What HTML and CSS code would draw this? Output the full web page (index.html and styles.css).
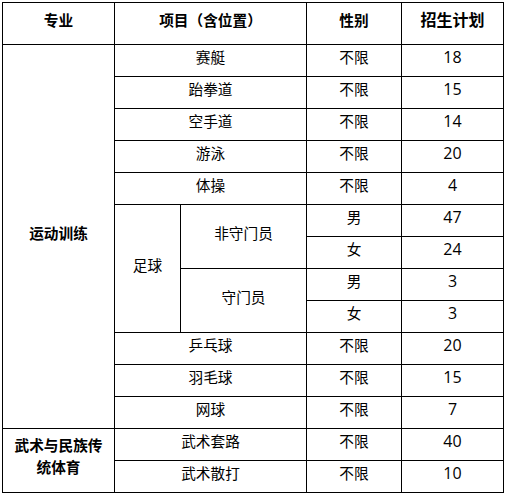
FILE: index.html
```html
<!DOCTYPE html>
<html lang="zh">
<head>
<meta charset="utf-8">
<link rel="stylesheet" href="styles.css">
</head>
<body>
<div class="plan">
  <div class="cell head c1">专业</div>
  <div class="cell head c23">项目（含位置）</div>
  <div class="cell head c4">性别</div>
  <div class="cell head big c5">招生计划</div>

  <div class="cell bold major1">运动训练</div>
  <div class="cell bold major2">武术与民族传统体育</div>

  <div class="cell c23">赛艇</div><div class="cell c4">不限</div><div class="cell c5 num">18</div>
  <div class="cell c23">跆拳道</div><div class="cell c4">不限</div><div class="cell c5 num">15</div>
  <div class="cell c23">空手道</div><div class="cell c4">不限</div><div class="cell c5 num">14</div>
  <div class="cell c23">游泳</div><div class="cell c4">不限</div><div class="cell c5 num">20</div>
  <div class="cell c23">体操</div><div class="cell c4">不限</div><div class="cell c5 num">4</div>

  <div class="cell football">足球</div>
  <div class="cell field">非守门员</div><div class="cell c4">男</div><div class="cell c5 num">47</div>
  <div class="cell c4">女</div><div class="cell c5 num">24</div>
  <div class="cell keeper">守门员</div><div class="cell c4">男</div><div class="cell c5 num">3</div>
  <div class="cell c4">女</div><div class="cell c5 num">3</div>

  <div class="cell c23">乒乓球</div><div class="cell c4">不限</div><div class="cell c5 num">20</div>
  <div class="cell c23">羽毛球</div><div class="cell c4">不限</div><div class="cell c5 num">15</div>
  <div class="cell c23">网球</div><div class="cell c4">不限</div><div class="cell c5 num">7</div>
  <div class="cell c23">武术套路</div><div class="cell c4">不限</div><div class="cell c5 num">40</div>
  <div class="cell c23">武术散打</div><div class="cell c4">不限</div><div class="cell c5 num">10</div>
</div>
</body>
</html>
```

FILE: styles.css
```css
html, body {
  margin: 0;
  padding: 0;
  background: #fff;
}

body {
  padding: 2px 0 0 2px;
  font-family: "Open Sans", "Noto Sans CJK SC", sans-serif;
  font-size: 14.67px;
  color: #000;
}

.plan {
  display: grid;
  width: 502px;
  grid-template-columns: 111px 65px 125px 94px 101px;
  grid-template-rows: 41px repeat(14, 31px);
  gap: 1px;
  padding: 1px;
  box-sizing: border-box;
  background: #000;
}

.cell {
  background: #fff;
  display: flex;
  align-items: center;
  justify-content: center;
  text-align: center;
  padding: 0 4px 8px;
  line-height: 22px;
  white-space: normal;
}

.head {
  font-weight: bold;
}

.big {
  font-size: 16px;
}

.num {
  font-size: 16px;
}

.bold {
  font-weight: bold;
}

.c1 { grid-column: 1; }
.c23 { grid-column: 2 / span 2; }
.c4 { grid-column: 4; }
.c5 { grid-column: 5; }

.major1 {
  grid-column: 1;
  grid-row: 2 / span 12;
}

.major2 {
  grid-column: 1;
  grid-row: 14 / span 2;
  padding: 0 5px 9px;
}

.football {
  grid-column: 2;
  grid-row: 7 / span 4;
}

.field {
  grid-column: 3;
  grid-row: 7 / span 2;
}

.keeper {
  grid-column: 3;
  grid-row: 9 / span 2;
}
```
